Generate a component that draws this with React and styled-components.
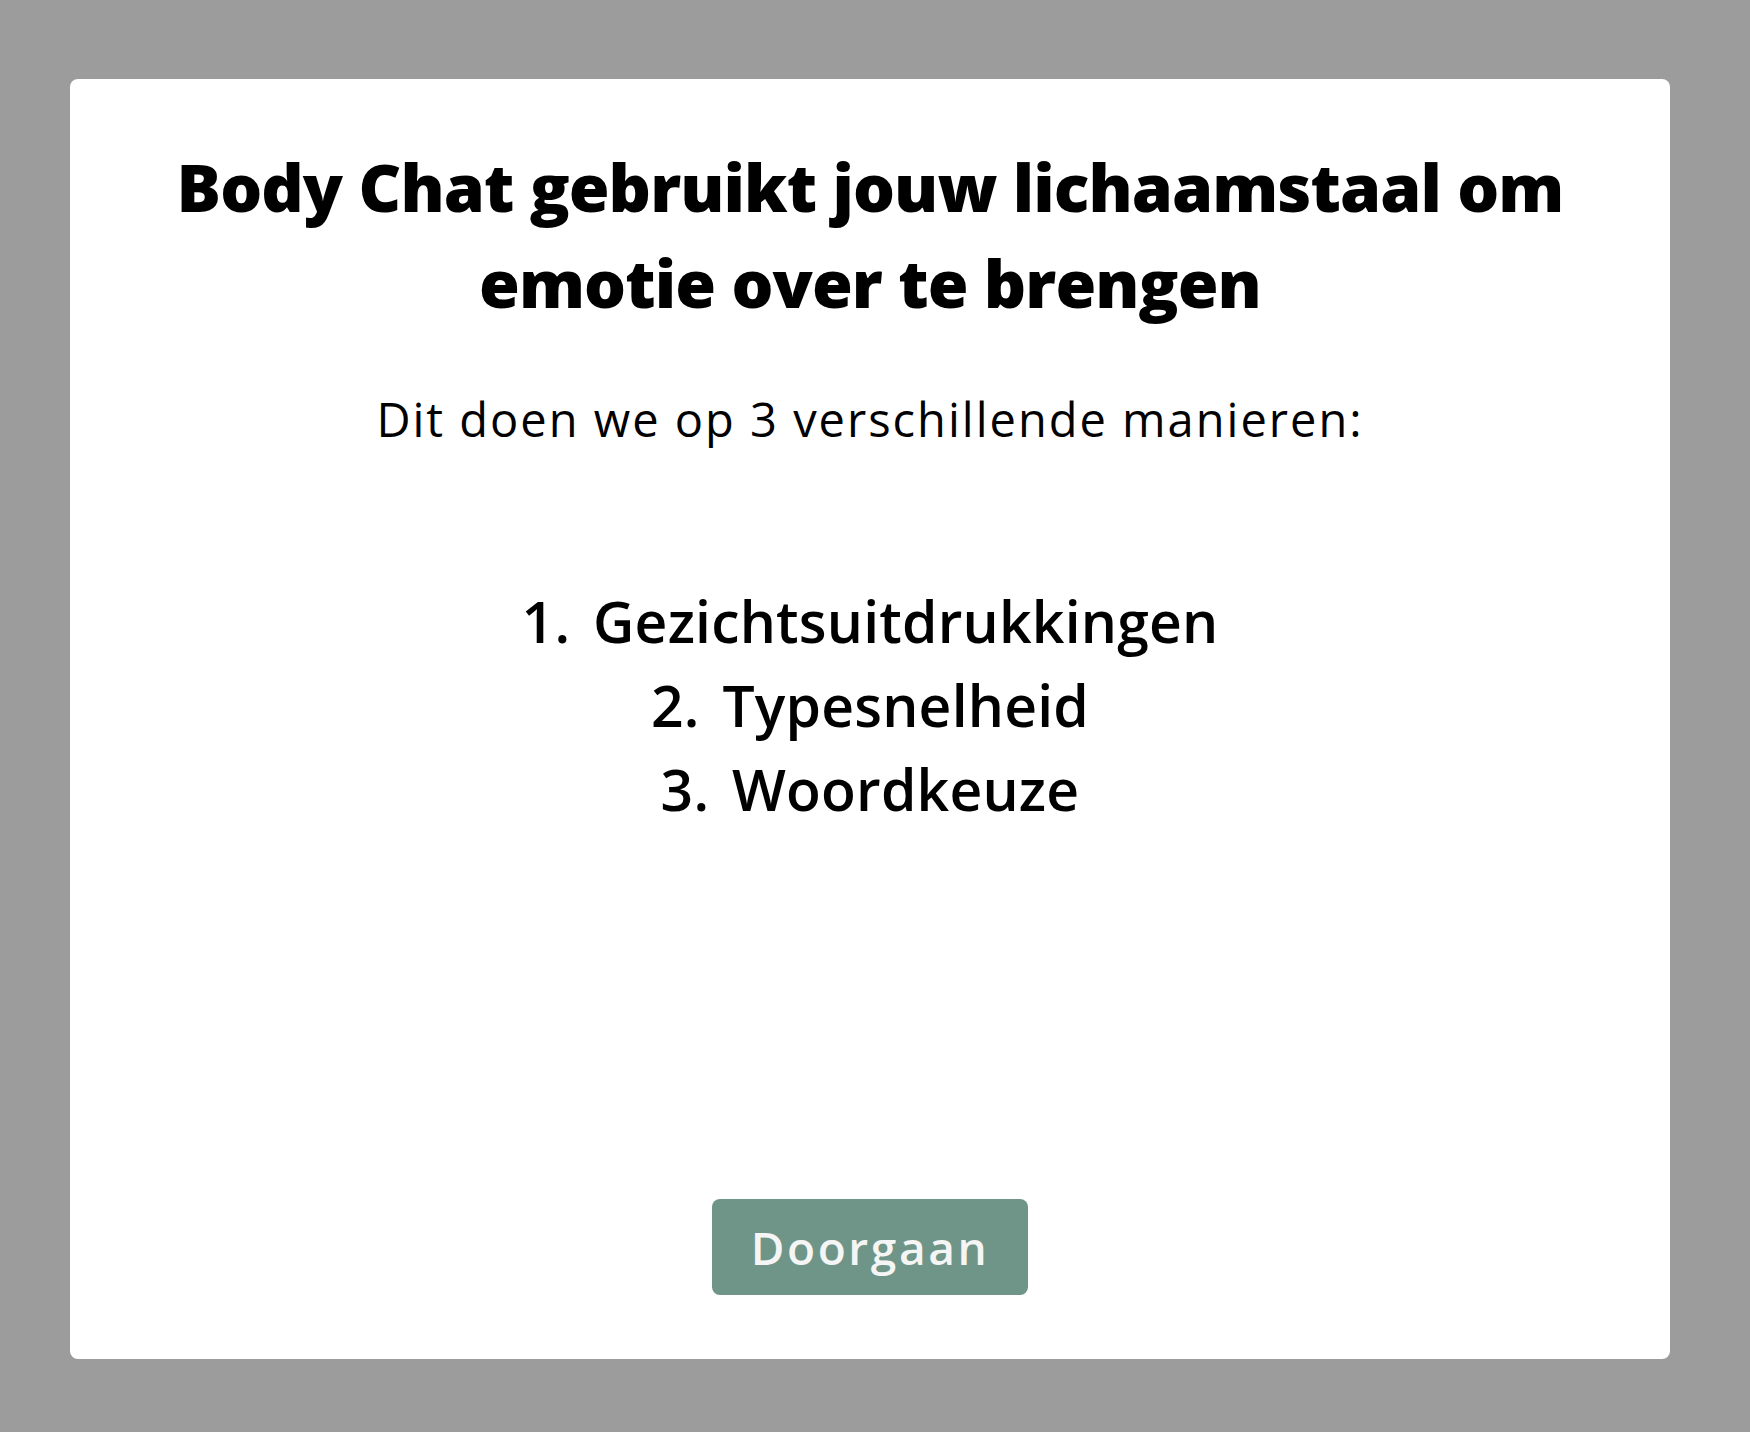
import React from "react"
import styled, { createGlobalStyle } from "styled-components"

const GlobalStyle = createGlobalStyle`
  html, body {
    margin: 0;
    padding: 0;
    background: #9c9c9c;
  }
  body {
    font-family: "Open Sans", "Liberation Sans", sans-serif;
    color: #000;
  }
`

const Page = styled.div`
  min-height: 1432px;
  box-sizing: border-box;
  padding: 79px 80px 73px 70px;
  display: flex;
`

const Card = styled.div`
  flex: 1;
  background: #fff;
  border-radius: 8px;
  display: flex;
  flex-direction: column;
  align-items: center;
  padding: 59px 60px 64px;
  box-sizing: border-box;
`

const Title = styled.h1`
  margin: 0;
  font-size: 66px;
  line-height: 96px;
  font-weight: 800;
  text-align: center;
  letter-spacing: -0.9px;
`

const Subtitle = styled.p`
  margin: 54px 0 0;
  font-size: 47px;
  line-height: 70px;
  font-weight: 400;
  text-align: center;
  letter-spacing: 2px;
`

const List = styled.ol`
  margin: 125px 0 0;
  padding: 0;
  list-style: none;
  display: flex;
  flex-direction: column;
  align-items: center;
`

const Item = styled.li`
  font-size: 57px;
  line-height: 84px;
  font-weight: 600;
  text-align: center;
  letter-spacing: 0.2px;

  span {
    margin-right: 0.4em;
  }
`

const Button = styled.button`
  margin-top: auto;
  width: 316px;
  height: 96px;
  border: none;
  border-radius: 8px;
  background: #6e9587;
  color: #f5f5f5;
  font-family: inherit;
  font-size: 46px;
  font-weight: 600;
  letter-spacing: 2.6px;
  cursor: pointer;
`

const steps = ["Gezichtsuitdrukkingen", "Typesnelheid", "Woordkeuze"]

export default function App() {
  return (
    <>
      <GlobalStyle />
      <Page>
        <Card>
          <Title>
            Body Chat gebruikt jouw lichaamstaal om
            <br />
            emotie over te brengen
          </Title>
          <Subtitle>Dit doen we op 3 verschillende manieren:</Subtitle>
          <List>
            {steps.map((step, i) => (
              <Item key={step}>
                <span>{i + 1}.</span>
                {step}
              </Item>
            ))}
          </List>
          <Button>Doorgaan</Button>
        </Card>
      </Page>
    </>
  )
}
